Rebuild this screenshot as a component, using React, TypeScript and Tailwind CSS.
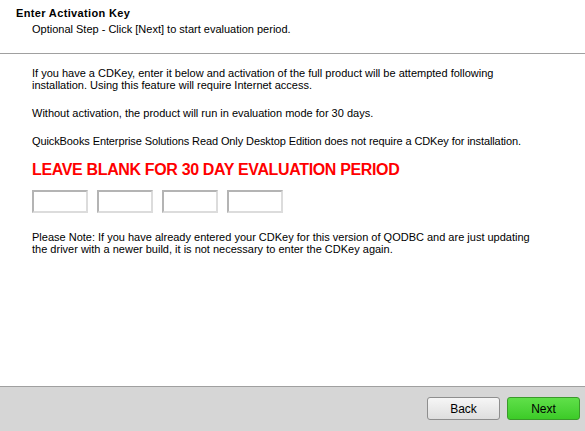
export default function App() {
  const keyBoxes = [0, 1, 2, 3];

  return (
    <div
      className="w-[585px] h-[431px] flex flex-col bg-white text-black text-[11px] leading-[12px] overflow-hidden"
      style={{ fontFamily: '"Liberation Sans", Arial, sans-serif' }}
    >
      {/* Header */}
      <div className="h-[54px] shrink-0 border-b border-[#a0a0a0] pl-4 pt-[7px]">
        <div className="font-bold leading-[13px] tracking-[0.35px]">Enter Activation Key</div>
        <div className="pl-4 mt-[3px] leading-[13px]">Optional Step - Click [Next] to start evaluation period.</div>
      </div>

      {/* Body */}
      <div className="flex-1 pl-8 pr-12 pt-[13px]">
        <p>
          If you have a CDKey, enter it below and activation of the full product will be attempted following
          <br />
          installation. Using this feature will require Internet access.
        </p>
        <p className="mt-[16px]">Without activation, the product will run in evaluation mode for 30 days.</p>
        <p className="mt-[16px] tracking-[-0.1px]">
          QuickBooks Enterprise Solutions Read Only Desktop Edition does not require a CDKey for installation.
        </p>
        <div className="mt-[14px] text-[16px] leading-[18px] font-bold text-[#ff0000] tracking-[-0.35px]">
          LEAVE BLANK FOR 30 DAY EVALUATION PERIOD
        </div>
        <div className="mt-[11px] flex gap-[9px]">
          {keyBoxes.map((i) => (
            <input
              key={i}
              type="text"
              className="w-[56px] h-[23px] border-2 border-t-[#b4b4b4] border-l-[#b4b4b4] border-b-[#dcdcdc] border-r-[#dcdcdc] bg-white outline-none px-1"
            />
          ))}
        </div>
        <p className="mt-[18px]">
          Please Note: If you have already entered your CDKey for this version of QODBC and are just updating
          <br />
          the driver with a newer build, it is not necessary to enter the CDKey again.
        </p>
      </div>

      {/* Footer */}
      <div className="h-[45px] shrink-0 border-t border-[#a0a0a0] bg-[#d6d6d6] flex items-start justify-end gap-[7px] pt-[10px] pr-[5px]">
        <button className="w-[73px] h-[23px] rounded-[3px] border border-[#8e8e8e] bg-gradient-to-b from-[#f6f6f6] to-[#dedede] text-[12px]">
          Back
        </button>
        <button className="w-[73px] h-[23px] rounded-[3px] border border-[#3a9a2a] bg-gradient-to-b from-[#5fe049] to-[#3ccb27] text-[12px]">
          Next
        </button>
      </div>
    </div>
  );
}
